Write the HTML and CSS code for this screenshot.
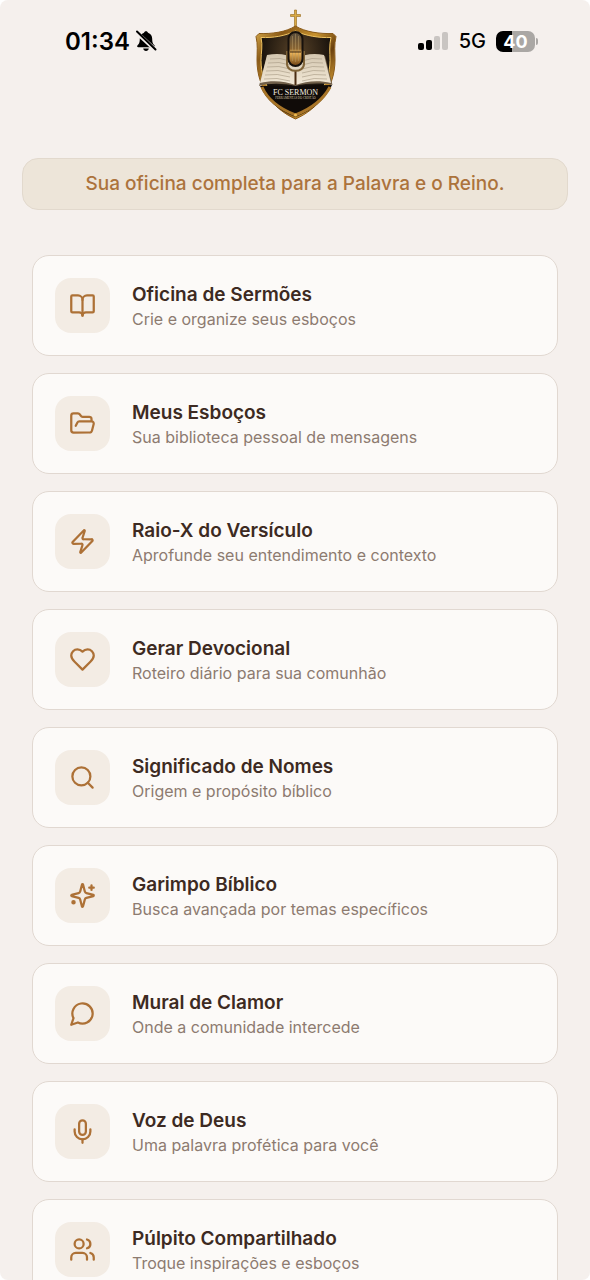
FILE: index.html
```html
<!DOCTYPE html>
<html lang="pt-BR">
<head>
    <meta charset="UTF-8">
    <meta name="viewport" content="width=device-width, initial-scale=1">
    <title>FC Sermon</title>
    <link rel="stylesheet" href="styles.css">
</head>
<body>
    <div class="screen">
        <header class="topbar">
            <div class="status status-left">
                <span class="clock">01:34</span>
                <svg class="bell" viewBox="0 0 22 22" aria-hidden="true">
                    <path d="M11 1.2c1 0 1.800.6 2 1.500 2.700.9 4.200 3.100 4.200 6.100 0 4 .9 5.200 2.200 6.400.9.9.5 2-.7 2H3.300c-1.200 0-1.600-1.100-.7-2 1.300-1.200 2.200-2.400 2.200-6.400 0-3 1.500-5.200 4.200-6.100.2-.9 1-1.500 2-1.500z"/>
                    <path d="M8.200 18.500h5.600c-.2 1.600-1.300 2.500-2.800 2.500s-2.600-.9-2.800-2.500z"/>
                    <path class="bell-gap" d="M1.500 2.500l18.500 17"/>
                    <path class="bell-slash" d="M2 1.500l18.500 18"/>
                </svg>
            </div>

            <svg class="logo" viewBox="0 0 90 112" role="img" aria-label="FC Sermon">
                <defs>
                    <linearGradient id="gold" x1="0" y1="0" x2="1" y2="1">
                        <stop offset="0" stop-color="#e0b350"/>
                        <stop offset=".2" stop-color="#8a5a17"/>
                        <stop offset=".42" stop-color="#c7922f"/>
                        <stop offset=".6" stop-color="#6b410e"/>
                        <stop offset=".8" stop-color="#d19a34"/>
                        <stop offset="1" stop-color="#7a4d12"/>
                    </linearGradient>
                    <linearGradient id="page" x1="0" y1="0" x2="0" y2="1">
                        <stop offset="0" stop-color="#d4c7b0"/>
                        <stop offset="1" stop-color="#f2e8d6"/>
                    </linearGradient>
                    <linearGradient id="mic" x1="0" y1="0" x2="0" y2="1">
                        <stop offset="0" stop-color="#54493a"/>
                        <stop offset=".5" stop-color="#8c6632"/>
                        <stop offset=".6" stop-color="#f0b85c"/>
                        <stop offset="1" stop-color="#6b4012"/>
                    </linearGradient>
                    <radialGradient id="inside" cx=".5" cy=".25" r=".6">
                        <stop offset="0" stop-color="#594328"/>
                        <stop offset="1" stop-color="#0e0a07"/>
                    </radialGradient>
                </defs>
                <path d="M44.500 1h2v4.500h4v2h-4V20h-2V7.500h-4v-2h4z" fill="#d9aa45" stroke="#946619" stroke-width=".6"/>
                <path d="M45.500 17C36 23 22 25 9 24.500l-3 3C8 36 7 43 7 51c0 28 16 49 38.500 59C68 100 85 79 85 51c0-8-1-15 1-23.500l-3-3C70 25 55 23 45.500 17z" fill="url(#gold)" stroke="#8b5b19"/>
                <path d="M45.500 22C35 27 23 29 11 28.500c2 8 0 15 0 23 0 25 15 43 34.500 53C65 94.500 80 76 80 51.500c0-8-1-15 1-23C69 29 56 27 45.500 22z" fill="url(#inside)" stroke="#f0c462"/>
                <path d="M10 77l72-1C75 91 63 101 45.500 108 28 101 17 92 10 77z" fill="#100b08"/>
                <path d="M12 78c6 14 18 22 33.500 28C61 100 73 91 80 78" fill="none" stroke="#a87528" stroke-width="3"/>
                <path d="M9 77c8-3 26-3 36.500 0 11-3 28-3 37-1L75 47c-12-2-22 0-29.500 3C38 47 28 45 17 47z" fill="#71604a"/>
                <path d="M10 74c12-3 25-2 35.500 2V50C37 45 28 44 17 46zM81 74c-12-3-25-2-35.500 2V50C54 45 64 44 74 46z" fill="url(#page)"/>
                <path d="M20 50q10-2 20 2M18 54q11-2 22 2M17 58q12-2 23 2M16 62q12-2 24 2M15 66q12-2 25 2M14 70q13-2 26 2M72 50q-10-2-20 2M73 54q-11-2-21 2M74 58q-12-2-22 2M75 62q-12-2-23 2M76 66q-12-2-24 2M77 70q-13-2-25 2" fill="none" stroke="#a59782" stroke-width=".6"/>
                <path d="M45.500 61v15" stroke="#4a2d12" stroke-width="2"/>
                <path d="M37 42v13c0 9 17 9 17 0V42" fill="none" stroke="#806438" stroke-width="2"/>
                <rect x="38.500" y="23" width="14" height="34" rx="7" fill="url(#mic)" stroke="#17110c" stroke-width="2"/>
                <path d="M42.500 27v25M45.500 25v28M48.500 27v25" stroke="#b59865" stroke-width=".5"/>
                <path d="M40 43h11" stroke="#37210d"/>
                <text x="45.500" y="86" text-anchor="middle" class="logo-name">FC SERMON</text>
                <text x="45.500" y="90" text-anchor="middle" class="logo-tag">FERRAMENTAS DO CRISTÃO</text>
                <circle cx="45.500" cy="106" r="1.500" fill="#efbd54"/>
            </svg>

            <div class="status status-right">
                <svg class="signal" viewBox="0 0 31 20" aria-hidden="true">
                    <rect x="0" y="12" width="6" height="7" rx="2"/>
                    <rect x="8" y="9" width="6" height="10" rx="2"/>
                    <rect class="off" x="16" y="5" width="6" height="14" rx="2"/>
                    <rect class="off" x="24" y="1" width="6" height="18" rx="2"/>
                </svg>
                <span class="network">5G</span>
                <span class="battery"><span class="level">40</span><span class="tip"></span></span>
            </div>
        </header>

        <main>
            <p class="slogan">Sua oficina completa para a Palavra e o Reino.</p>

            <nav class="menu">
                <a class="card" href="#oficina">
                    <span class="icon"><svg viewBox="0 0 24 24"><path d="M12 7v14"/><path d="M3 18a1 1 0 0 1-1-1V4a1 1 0 0 1 1-1h5a4 4 0 0 1 4 4 4 4 0 0 1 4-4h5a1 1 0 0 1 1 1v13a1 1 0 0 1-1 1h-6a3 3 0 0 0-3 3 3 3 0 0 0-3-3z"/></svg></span>
                    <span class="text">
                        <span class="title">Oficina de Sermões</span>
                        <span class="desc">Crie e organize seus esboços</span>
                    </span>
                </a>
                <a class="card" href="#esbocos">
                    <span class="icon"><svg viewBox="0 0 24 24"><path d="m6 14 1.500-2.900A2 2 0 0 1 9.240 10H20a2 2 0 0 1 1.940 2.500l-1.540 6a2 2 0 0 1-1.950 1.500H4a2 2 0 0 1-2-2V5a2 2 0 0 1 2-2h3.900a2 2 0 0 1 1.690.9l.81 1.200a2 2 0 0 0 1.670.9H18a2 2 0 0 1 2 2v2"/></svg></span>
                    <span class="text">
                        <span class="title">Meus Esboços</span>
                        <span class="desc">Sua biblioteca pessoal de mensagens</span>
                    </span>
                </a>
                <a class="card" href="#raio-x">
                    <span class="icon"><svg viewBox="0 0 24 24"><path d="M4 14a1 1 0 0 1-.78-1.630l9.900-10.200a.5.5 0 0 1 .86.460l-1.920 6.020A1 1 0 0 0 13 10h7a1 1 0 0 1 .78 1.630l-9.900 10.200a.5.5 0 0 1-.86-.46l1.920-6.020A1 1 0 0 0 11 14z"/></svg></span>
                    <span class="text">
                        <span class="title">Raio-X do Versículo</span>
                        <span class="desc">Aprofunde seu entendimento e contexto</span>
                    </span>
                </a>
                <a class="card" href="#devocional">
                    <span class="icon"><svg viewBox="0 0 24 24"><path d="M19 14c1.490-1.460 3-3.210 3-5.500A5.500 5.500 0 0 0 16.500 3c-1.760 0-3 .5-4.500 2-1.500-1.500-2.740-2-4.500-2A5.500 5.500 0 0 0 2 8.500c0 2.300 1.500 4.050 3 5.500l7 7z"/></svg></span>
                    <span class="text">
                        <span class="title">Gerar Devocional</span>
                        <span class="desc">Roteiro diário para sua comunhão</span>
                    </span>
                </a>
                <a class="card" href="#nomes">
                    <span class="icon"><svg viewBox="0 0 24 24"><circle cx="11" cy="11" r="8"/><path d="m21 21-4.300-4.300"/></svg></span>
                    <span class="text">
                        <span class="title">Significado de Nomes</span>
                        <span class="desc">Origem e propósito bíblico</span>
                    </span>
                </a>
                <a class="card" href="#garimpo">
                    <span class="icon"><svg viewBox="0 0 24 24"><path d="M9.937 15.500A2 2 0 0 0 8.500 14.063l-6.135-1.582a.5.5 0 0 1 0-.962L8.500 9.936A2 2 0 0 0 9.937 8.500l1.582-6.135a.5.5 0 0 1 .963 0L14.063 8.500A2 2 0 0 0 15.500 9.937l6.135 1.581a.5.5 0 0 1 0 .964L15.500 14.063a2 2 0 0 0-1.437 1.437l-1.582 6.135a.5.5 0 0 1-.963 0z"/><path d="M20 3v4"/><path d="M22 5h-4"/><circle cx="4" cy="18" r="1"/></svg></span>
                    <span class="text">
                        <span class="title">Garimpo Bíblico</span>
                        <span class="desc">Busca avançada por temas específicos</span>
                    </span>
                </a>
                <a class="card" href="#mural">
                    <span class="icon"><svg viewBox="0 0 24 24"><path d="M7.900 20A9 9 0 1 0 4 16.100L2 22z"/></svg></span>
                    <span class="text">
                        <span class="title">Mural de Clamor</span>
                        <span class="desc">Onde a comunidade intercede</span>
                    </span>
                </a>
                <a class="card" href="#voz">
                    <span class="icon"><svg viewBox="0 0 24 24"><path d="M12 2a3 3 0 0 0-3 3v7a3 3 0 0 0 6 0V5a3 3 0 0 0-3-3z"/><path d="M19 10v2a7 7 0 0 1-14 0v-2"/><path d="M12 19v3"/></svg></span>
                    <span class="text">
                        <span class="title">Voz de Deus</span>
                        <span class="desc">Uma palavra profética para você</span>
                    </span>
                </a>
                <a class="card" href="#pulpito">
                    <span class="icon"><svg viewBox="0 0 24 24"><path d="M16 21v-2a4 4 0 0 0-4-4H6a4 4 0 0 0-4 4v2"/><circle cx="9" cy="7" r="4"/><path d="M22 21v-2a4 4 0 0 0-3-3.870"/><path d="M16 3.130a4 4 0 0 1 0 7.750"/></svg></span>
                    <span class="text">
                        <span class="title">Púlpito Compartilhado</span>
                        <span class="desc">Troque inspirações e esboços</span>
                    </span>
                </a>
            </nav>
        </main>
    </div>
</body>
</html>
```
FILE: styles.css
```css
* {
    box-sizing: border-box;
}
body {
    margin: 0;
    background-color: #fff;
    color: #3d2a22;
    font-family: Inter, "Liberation Sans", sans-serif;
}
.screen {
    height: 100vh;
    overflow-y: auto;
    scrollbar-width: none;
    background-color: #f5f0ed;
    border-radius: 8px;
}

/* status bar + logo */
.topbar {
    display: grid;
    grid-template-columns: 1fr auto 1fr;
    align-items: start;
    padding: 9px 52px 0;
    color: #000;
}
.status {
    display: flex;
    align-items: center;
    height: 32px;
    margin-top: 16px;
}
.status-left {
    gap: 5px;
    padding-left: 13px;
}
.status-right {
    justify-content: flex-end;
    gap: 10px;
}
.clock {
    font-size: 24px;
    font-weight: 600;
}
.bell {
    width: 22px;
    height: 22px;
}
.bell-gap {
    stroke: #f5f0ed;
    stroke-width: 4;
}
.bell-slash {
    stroke: #000;
    stroke-width: 2;
    stroke-linecap: round;
}
.logo {
    width: 90px;
    height: 112px;
}
.logo-name {
    font-family: "Liberation Serif", serif;
    font-size: 8px;
    fill: #f6efe2;
}
.logo-tag {
    font-family: "Liberation Serif", serif;
    font-size: 3px;
    fill: #d8c9ae;
}
.signal {
    width: 31px;
    height: 20px;
}
.signal .off {
    fill: #c9c5c2;
}
.network {
    font-size: 20px;
    font-weight: 500;
}
.battery {
    display: flex;
    align-items: center;
    gap: 1px;
}
.level {
    width: 39px;
    height: 21px;
    border-radius: 7px;
    background: linear-gradient(to right, #000 40%, #aaa7a4 40%);
    color: #fff;
    font-size: 18px;
    font-weight: 700;
    line-height: 21px;
    text-align: center;
}
.tip {
    width: 2px;
    height: 7px;
    border-radius: 0 2px 2px 0;
    background-color: #aaa7a4;
}

main {
    padding: 37px 22px 0;
}
.slogan {
    margin: 0;
    padding: 12px;
    border: 1px solid #e2d9cd;
    border-radius: 16px;
    background-color: #ede5d9;
    color: #ac733c;
    font-size: 19px;
    font-weight: 500;
    line-height: 26px;
    text-align: center;
}

/* menu cards */
.menu {
    display: flex;
    flex-direction: column;
    gap: 17px;
    padding: 45px 10px 24px;
}
.card {
    display: flex;
    align-items: center;
    gap: 22px;
    padding: 22px;
    border: 1px solid #e1d8d1;
    border-radius: 17px;
    background-color: #fcfaf8;
    color: inherit;
    text-decoration: none;
}
.icon {
    display: flex;
    align-items: center;
    justify-content: center;
    width: 55px;
    height: 55px;
    border-radius: 16px;
    background-color: #f3ece4;
}
.icon svg {
    width: 27px;
    height: 27px;
    fill: none;
    stroke: #ad7136;
    stroke-width: 2;
    stroke-linecap: round;
    stroke-linejoin: round;
}
.text {
    display: flex;
    flex-direction: column;
    padding-top: 2px;
}
.title {
    font-size: 19px;
    font-weight: 600;
    line-height: 25px;
}
.desc {
    color: #8d7b70;
    font-size: 16px;
    line-height: 24px;
}
```
